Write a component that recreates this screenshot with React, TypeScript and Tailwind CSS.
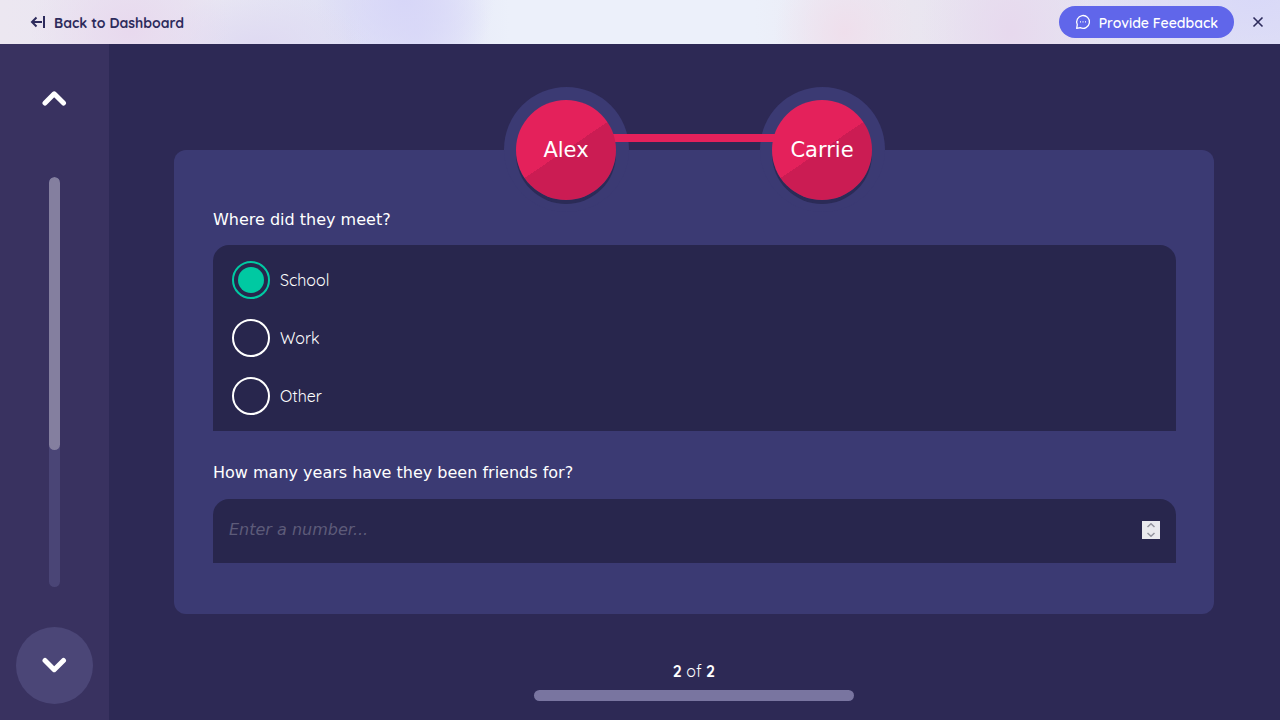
import { useState } from "react";

const places = ["School", "Work", "Other"];

function Chevron({ down = false }: { down?: boolean }) {
  return (
    <svg width="26" height="17" viewBox="0 0 26 17" fill="none" stroke="white" strokeWidth="5" strokeLinecap="round" strokeLinejoin="round" aria-hidden="true">
      <path d={down ? "M3 3.5 12.2 12.7 21.5 3.5" : "M3 13 12.2 3.8 21.5 13"} />
    </svg>
  );
}

function Node({ name }: { name: string }) {
  return (
    <div className="flex size-[125px] shrink-0 items-center justify-center rounded-full bg-[#3b3a73]">
      <div className="z-20 flex size-[100px] items-center justify-center rounded-full bg-[linear-gradient(146deg,#e4215b_50%,#cb1c53_50%)] pt-0.5 text-[21px] shadow-[0_4px_0_#2b2b57]">
        {name}
      </div>
    </div>
  );
}

export default function App() {
  const [place, setPlace] = useState("School");
  const [years, setYears] = useState("");
  const step = (delta: number) => setYears(String(Math.max(0, Number(years) + delta)));

  return (
    <div className="flex min-h-screen flex-col bg-[#2d2955] font-['DejaVu_Sans',sans-serif] text-base text-white">
      <header className="flex h-11 items-center justify-between bg-[#ecf0fa] bg-[radial-gradient(ellipse_100px_90px_at_130px_30px,#e8d9ee,#e8d9ee00),radial-gradient(ellipse_110px_50px_at_260px_44px,#dfdaf2,#dfdaf200),radial-gradient(ellipse_90px_80px_at_405px_0px,#d7d6f8,#d7d6f800),radial-gradient(ellipse_75px_80px_at_415px_32px,#dcdcf8,#dcdcf800),radial-gradient(ellipse_70px_80px_at_66%_32px,#efdfec,#efdfec00),radial-gradient(ellipse_90px_120px_at_79%_32px,#e7d9ee,#e7d9ee00),radial-gradient(ellipse_180px_90px_at_98%_0px,#d9d9f8,#d9d9f800),linear-gradient(90deg,#ece7f1_0px,#e8e6f3_220px,#e0e1f5_350px,#ecf0fa_510px,#ecf0fa_59%,#eae6f0_71%,#e0e0f4_100%)] pr-[14px] pl-[30px] font-[Quicksand,Lato,sans-serif] text-[#2d2b5c]">
        <a href="#dashboard" className="flex items-center gap-2 text-sm leading-5 font-bold">
          <svg width="16" height="14" viewBox="0 0 16 14" fill="none" stroke="currentColor" strokeWidth="2" aria-hidden="true">
            <path d="M14 1v12M12 7H2.5M6.5 2.5 2 7l4.500 4.500" />
          </svg>
          <span className="pt-0.5">Back to Dashboard</span>
        </a>
        <div className="flex items-center gap-4">
          <button type="button" className="flex h-8 items-center gap-2 rounded-full bg-[#6066ea] px-4 text-sm leading-5 font-semibold text-white">
            <svg width="16" height="16" viewBox="0 0 16 16" fill="none" stroke="currentColor" strokeWidth="1.300" strokeLinejoin="round" aria-hidden="true">
              <path d="M1.700 14.300 2.300 10.700A6.400 6.400 0 1 1 5.300 13.700Z" />
              <path d="M5 7.800h1M7.500 7.800h1M10 7.800h1" strokeWidth="1.200" />
            </svg>
            <span className="pt-0.5">Provide Feedback</span>
          </button>
          <button type="button" aria-label="Close" className="flex size-4 items-center justify-center">
            <svg width="12" height="12" viewBox="0 0 12 12" stroke="currentColor" strokeWidth="1.600" aria-hidden="true">
              <path d="M1.500 1.500 10.500 10.500M10.500 1.500 1.500 10.500" />
            </svg>
          </button>
        </div>
      </header>

      <div className="flex flex-1">
        <nav className="flex w-[109px] shrink-0 flex-col items-center gap-10 bg-[#393260] py-4">
          <button type="button" aria-label="Previous" className="flex size-[77px] items-center justify-center rounded-full">
            <Chevron />
          </button>
          <div className="flex w-[11px] flex-1 flex-col overflow-hidden rounded-full bg-[#4a4576]">
            <div className="h-2/3 rounded-full bg-[#847f9f]" />
          </div>
          <button type="button" aria-label="Next" className="flex size-[77px] items-center justify-center rounded-full bg-[#4b4677]">
            <Chevron down />
          </button>
        </nav>

        <main className="flex flex-1 flex-col pt-[43px] pr-[66px] pb-[19px] pl-[65px]">
          <div className="z-10 flex justify-center">
            <Node name="Alex" />
            <div className="z-10 -mx-4 mt-[47px] h-2 w-[163px] bg-[#e4215b]" />
            <Node name="Carrie" />
          </div>

          <form className="-mt-[62px] rounded-xl bg-[#3b3a73] pt-[58px] pr-[38px] pb-[51px] pl-[39px]">
            <fieldset>
              <legend className="mb-[13px] leading-6">Where did they meet?</legend>
              <div className="flex flex-col gap-5 rounded-t-2xl bg-[#28264d] px-[19px] py-4">
                {places.map((option) => (
                  <label key={option} className="flex items-center gap-[10px] font-[Quicksand,Lato,sans-serif] leading-6">
                    <input
                      type="radio"
                      name="place"
                      checked={place === option}
                      onChange={() => setPlace(option)}
                      className="flex size-[38px] appearance-none items-center justify-center rounded-full border-2 border-white before:size-[26px] before:rounded-full checked:border-[#00c9a2] checked:before:bg-[#00c9a2]"
                    />
                    {option}
                  </label>
                ))}
              </div>
            </fieldset>

            <label htmlFor="years" className="mt-[30px] mb-[14px] block leading-6">
              How many years have they been friends for?
            </label>
            <div className="flex h-16 items-center rounded-t-2xl bg-[#28264d] px-4 pb-0.5">
              <input
                id="years"
                type="number"
                placeholder="Enter a number..."
                value={years}
                onChange={(e) => setYears(e.target.value)}
                className="h-full min-w-0 flex-1 appearance-none bg-transparent pb-0.5 outline-none [appearance:textfield] placeholder:text-[#5d5b79] placeholder:italic"
              />
              <div className="flex size-[18px] flex-col bg-[#e9e9ee]">
                <button type="button" aria-label="Increase" onClick={() => step(1)} className="flex flex-1 items-center justify-center">
                  <svg width="8" height="5" viewBox="0 0 8 5" fill="none" stroke="#92929d" strokeWidth="1.500" aria-hidden="true">
                    <path d="M.5 4 4 .8 7.500 4" />
                  </svg>
                </button>
                <button type="button" aria-label="Decrease" onClick={() => step(-1)} className="flex flex-1 items-center justify-center">
                  <svg width="8" height="5" viewBox="0 0 8 5" fill="none" stroke="#92929d" strokeWidth="1.500" aria-hidden="true">
                    <path d="M.5 1 4 4.200 7.500 1" />
                  </svg>
                </button>
              </div>
            </div>
          </form>

          <div className="mt-auto flex flex-col items-center gap-[7px]">
            <p className="font-[Quicksand,Lato,sans-serif] leading-6">
              <b className="font-bold">2</b> of <b className="font-bold">2</b>
            </p>
            <div className="h-[11px] w-80 rounded-full bg-[#7975a0]" />
          </div>
        </main>
      </div>
    </div>
  );
}
